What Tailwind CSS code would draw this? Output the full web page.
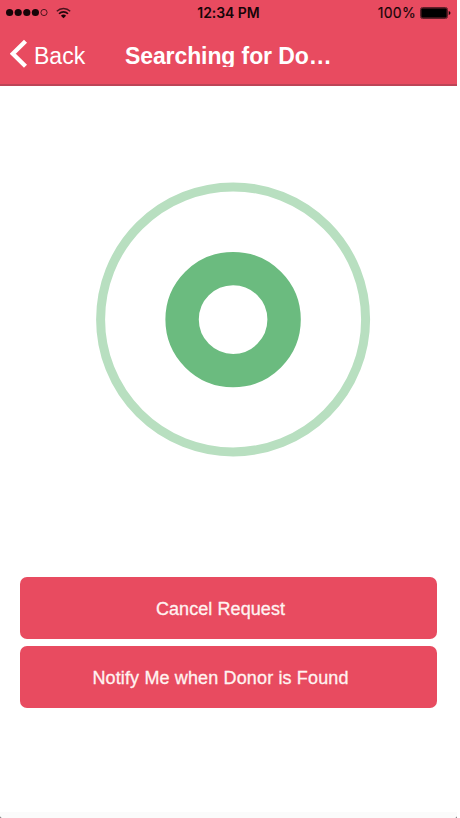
<!DOCTYPE html>
<html lang="en">
<head>
<meta charset="utf-8">
<title>Searching for Donor</title>
<script src="https://cdn.jsdelivr.net/npm/@tailwindcss/browser@4"></script>
</head>
<body class="bg-white">
<div class="relative flex h-[818px] w-[457px] flex-col overflow-hidden bg-white font-['Liberation_Sans',sans-serif]">
  <header class="h-[86px] shrink-0 border-b-2 border-[#bd4457] bg-[#e84b60]">
    <div class="flex h-[25px] items-center justify-between pl-[6px] pr-[6px] font-['Inter',sans-serif] text-[#160508]">
      <div class="flex w-[166px] items-center gap-[8px]">
        <svg class="h-[9px] w-[42px]" viewBox="0 0 42 9"><g fill="#160508"><circle cx="3.600" cy="4.500" r="3.600"/><circle cx="12.200" cy="4.500" r="3.600"/><circle cx="20.800" cy="4.500" r="3.600"/><circle cx="29.400" cy="4.500" r="3.600"/></g><circle cx="38" cy="4.500" r="3.100" fill="none" stroke="#3c1018" stroke-width=".9"/></svg>
        <svg class="h-[12px] w-[15px]" viewBox="0 0 15 12" fill="none" stroke="#24080d" stroke-width="1.6"><path d="M.8 4.200a9.600 9.600 0 0 1 13.400 0" stroke="#4a141e" stroke-width="1.400"/><path d="M3 6.700a6.400 6.400 0 0 1 9 0"/><path d="M7.500 11.200 4.900 8.800a3.700 3.700 0 0 1 5.200 0z" fill="#160508" stroke="none"/></svg>
      </div>
      <span class="whitespace-nowrap text-[14px] font-semibold leading-[25px] tracking-[-0.05px]">12:34 PM</span>
      <div class="flex w-[166px] items-center justify-end gap-[4px]">
        <span class="text-[14px] leading-[25px] tracking-[0.3px] [-webkit-text-stroke:0.15px]">100%</span>
        <svg class="h-[12px] w-[31px]" viewBox="0 0 31 12"><rect x=".5" y=".5" width="27" height="11" rx="2" fill="none" stroke="#60202a"/><rect x="1.200" y="1.200" width="25.600" height="9.600" rx="1" fill="#000"/><path d="M28.700 4q1.800.5 1.800 2t-1.800 2z" fill="#160508"/></svg>
      </div>
    </div>
    <div class="flex h-[59px] items-start pl-[10px] text-white">
      <svg class="mt-[14px] h-[30px] w-[18px] shrink-0" viewBox="0 0 18 30" fill="none" stroke="#fff" stroke-width="4.300"><path d="M15.500 2.200 2.800 14.700l12.700 12.500"/></svg>
      <span class="ml-[6px] mt-[17px] w-[91px] shrink-0 text-[23px] leading-[28px]">Back</span>
      <h1 class="mt-[17px] h-[25px] overflow-hidden whitespace-nowrap text-[23px] font-bold leading-[28px] tracking-[-0.1px]">Searching for Do…</h1>
    </div>
  </header>
  <main class="flex flex-1 flex-col">
    <svg class="ml-[96px] mt-[96px] h-[275px] w-[275px]" viewBox="0 0 275 275" fill="none"><circle cx="137.100" cy="137.400" r="132.500" stroke="#b8dfc0" stroke-width="9"/><circle cx="137.100" cy="137.600" r="51" stroke="#6bbb7f" stroke-width="33.400"/></svg>
    <div class="mt-[120px] flex flex-col gap-[7px] px-[20px] text-[18px] text-[#fff3f1] [-webkit-text-stroke:0.3px]">
      <button class="h-[62px] rounded-[7px] bg-[#e84b60] pr-[16px] pt-[2px] tracking-[0.07px]">Cancel Request</button>
      <button class="h-[62px] rounded-[7px] bg-[#e84b60] pr-[16px] pt-[2px] tracking-[0.14px]">Notify Me when Donor is Found</button>
    </div>
  </main>
  <footer class="flex h-[6px] flex-col justify-end bg-[#fbfbfb]">
    <div class="h-[2px] bg-[#555]"><div class="h-[2px] rounded-b-[4px] bg-[#fbfbfb]"></div></div>
  </footer>
</div>
</body>
</html>
